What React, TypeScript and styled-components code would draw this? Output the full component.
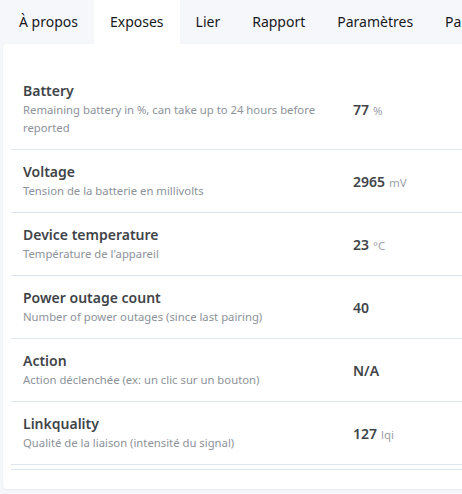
import styled, { createGlobalStyle } from 'styled-components';

const GlobalStyle = createGlobalStyle`
  html, body {
    margin: 0;
    padding: 0;
    background: #f6f7fb;
    overflow: hidden;
  }
  body {
    font-family: 'Noto Sans', 'Open Sans', sans-serif;
  }
`;

const tabs = ['À propos', 'Exposes', 'Lier', 'Rapport', 'Paramètres', 'Paramètres (spécifiques)'];

const exposes = [
  {
    name: 'Battery',
    description: 'Remaining battery in %, can take up to 24 hours before reported',
    value: '77',
    unit: '%',
  },
  { name: 'Voltage', description: 'Tension de la batterie en millivolts', value: '2965', unit: 'mV' },
  { name: 'Device temperature', description: "Température de l'appareil", value: '23', unit: '°C' },
  { name: 'Power outage count', description: 'Number of power outages (since last pairing)', value: '40' },
  { name: 'Action', description: 'Action déclenchée (ex: un clic sur un bouton)', value: 'N/A' },
  { name: 'Linkquality', description: 'Qualité de la liaison (intensité du signal)', value: '127', unit: 'lqi' },
];

const App = () => {
  return (
    <Page>
      <GlobalStyle />
      <TabBar>
        {tabs.map((tab) => (
          <Tab key={tab} $active={tab === 'Exposes'}>
            {tab}
          </Tab>
        ))}
      </TabBar>
      <Card>
        <ExposeList>
          {exposes.map((item) => (
            <Row key={item.name}>
              <Info>
                <Title>{item.name}</Title>
                <Description>{item.description}</Description>
              </Info>
              <Value>
                {item.value}
                {item.unit && <Unit>{item.unit}</Unit>}
              </Value>
            </Row>
          ))}
        </ExposeList>
        <Footer />
      </Card>
    </Page>
  );
};

export default App;

const Page = styled.div`
  width: 462px;
  height: 494px;
  overflow: hidden;
`;

const TabBar = styled.ul`
  display: flex;
  margin: 0;
  padding: 0 0 0 3px;
  list-style: none;
  height: 44px;
  overflow: hidden;
`;

const Tab = styled.li<{ $active?: boolean }>`
  display: flex;
  align-items: center;
  flex-shrink: 0;
  padding: 0 16px 1px;
  font-size: 14px;
  color: #16181c;
  white-space: nowrap;
  background: ${({ $active }) => ($active ? '#ffffff' : 'transparent')};
`;

const Card = styled.div`
  width: 640px;
  margin-left: 3px;
  background: #ffffff;
  border-radius: 4px;
  box-shadow: 0 1px 3px rgba(30, 40, 60, 0.06);
  padding: 25px 0 0 8px;
  height: 445px;
  box-sizing: border-box;
`;

const ExposeList = styled.div`
  display: flex;
  flex-direction: column;
`;

const Row = styled.div`
  display: grid;
  grid-template-columns: 330px 1fr;
  align-items: center;
  padding: 12px 0;
  border-bottom: 1px solid #dfe5ed;
`;

const Info = styled.div`
  display: flex;
  flex-direction: column;
  padding-left: 12px;
`;

const Title = styled.div`
  font-size: 14px;
  font-weight: 600;
  color: #404449;
  line-height: 20px;
`;

const Description = styled.div`
  font-size: 11.3px;
  color: #8d9299;
  line-height: 18px;
`;

const Value = styled.div`
  padding-left: 12px;
  font-size: 14px;
  font-weight: 600;
  color: #404449;
`;

const Unit = styled.span`
  margin-left: 4px;
  font-size: 11.5px;
  font-weight: 400;
  color: #9aa0a7;
`;

const Footer = styled.div`
  margin-top: 4px;
  border-top: 1px solid #dfe5ed;
`;
